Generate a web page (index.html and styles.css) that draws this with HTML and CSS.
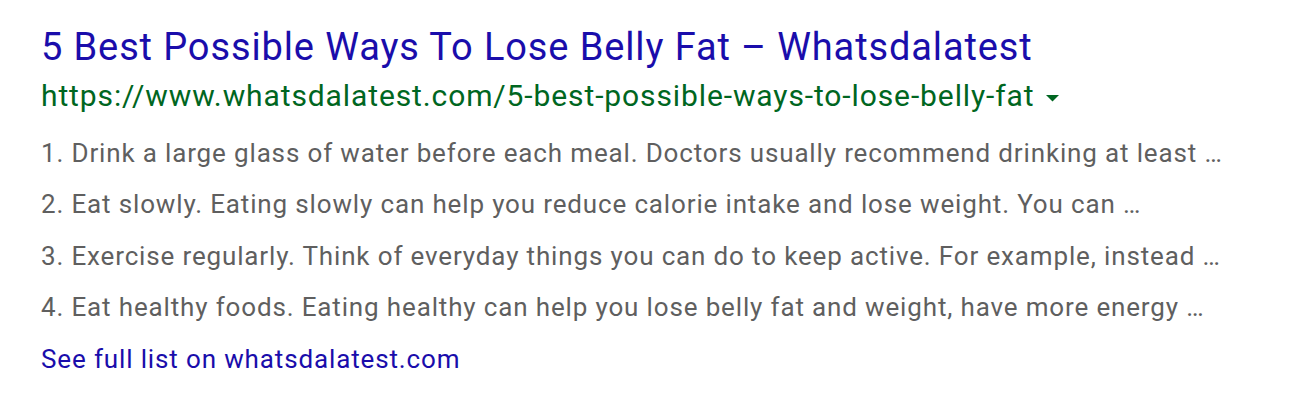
FILE: index.html
```html
<!DOCTYPE html>
<html>
<head>
<meta charset="utf-8">
<link rel="stylesheet" href="styles.css">
</head>
<body>
<div class="result">
  <a class="title" href="#">5 Best Possible Ways To Lose Belly Fat – Whatsdalatest</a>
  <div class="url-row">
    <span class="url">https://www.whatsdalatest.com/5-best-possible-ways-to-lose-belly-fat</span>
    <svg class="caret" width="13" height="7" viewBox="0 0 13 7"><path d="M0 0 L13 0 L6.5 6.5 Z" fill="#006621"/></svg>
  </div>
  <ol class="list">
    <li>1. Drink a large glass of water before each meal. Doctors usually recommend drinking at least …</li>
    <li>2. Eat slowly. Eating slowly can help you reduce calorie intake and lose weight. You can …</li>
    <li>3. Exercise regularly. Think of everyday things you can do to keep active. For example, instead …</li>
    <li>4. Eat healthy foods. Eating healthy can help you lose belly fat and weight, have more energy …</li>
  </ol>
  <a class="more" href="#">See full list on whatsdalatest.com</a>
</div>
</body>
</html>
```
FILE: styles.css
```css
html, body {
  margin: 0;
  padding: 0;
  background: #ffffff;
}
body {
  font-family: Roboto, "Liberation Sans", Arial, sans-serif;
}
.result {
  display: flex;
  flex-direction: column;
  align-items: flex-start;
  padding: 25px 0 0 41px;
}
.title {
  font-size: 38px;
  line-height: 44px;
  letter-spacing: 0.88px;
  color: #1a0dab;
  text-decoration: none;
}
.url-row {
  display: flex;
  align-items: center;
  gap: 11px;
  margin-top: 9px;
  height: 36px;
}
.url {
  font-size: 30px;
  line-height: 36px;
  letter-spacing: 0.89px;
  color: #006621;
}
.caret {
  margin-top: 4px;
}
.list {
  list-style: none;
  margin: 13.6px 0 0 0;
  padding: 0;
}
.list li {
  font-size: 26px;
  line-height: 51.5px;
  letter-spacing: 0.85px;
  color: #5f5f5f;
  white-space: nowrap;
}
.more {
  font-size: 26px;
  line-height: 51.5px;
  letter-spacing: 0.86px;
  color: #1a0dab;
  text-decoration: none;
}
```
